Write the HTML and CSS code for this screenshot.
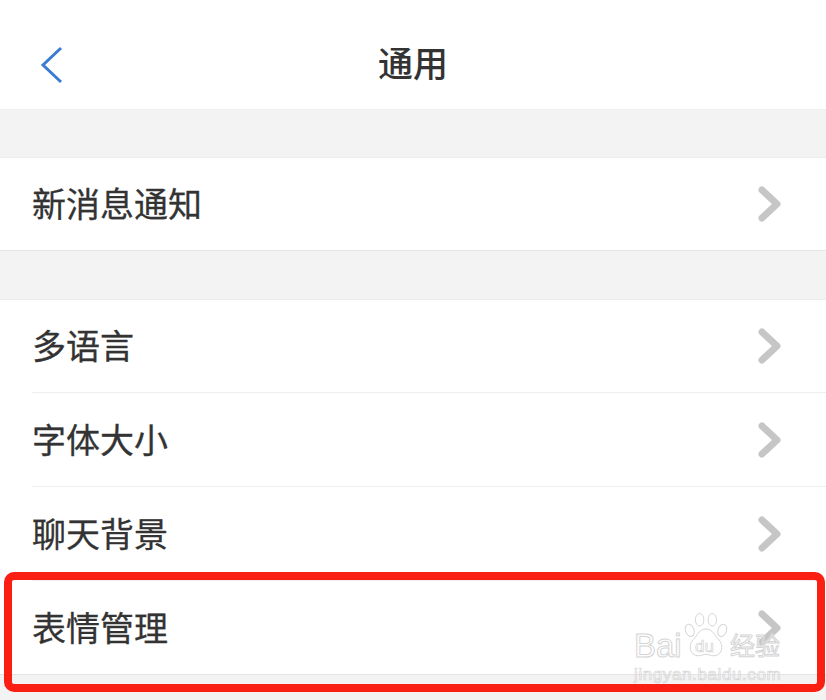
FILE: index.html
```html
<!DOCTYPE html>
<html>
<head>
  <meta charset="utf-8" />
  <title>通用</title>
  <link rel="stylesheet" href="styles.css">
</head>
<body>
  <div class="page">
    <header class="topbar">
      <svg class="back" width="24" height="38" viewBox="0 0 24 38">
        <path d="M21 2 L3 19 L21 36" />
      </svg>
      <h1>通用</h1>
    </header>

    <div class="group">
      <div class="row"><span>新消息通知</span>
        <svg class="arrow" width="26" height="38" viewBox="0 0 26 38"><path d="M5 5 L20 19 L5 33" /></svg>
      </div>
    </div>

    <div class="group group-long">
      <div class="row"><span>多语言</span>
        <svg class="arrow" width="26" height="38" viewBox="0 0 26 38"><path d="M5 5 L20 19 L5 33" /></svg>
      </div>
      <div class="row"><span>字体大小</span>
        <svg class="arrow" width="26" height="38" viewBox="0 0 26 38"><path d="M5 5 L20 19 L5 33" /></svg>
      </div>
      <div class="row"><span>聊天背景</span>
        <svg class="arrow" width="26" height="38" viewBox="0 0 26 38"><path d="M5 5 L20 19 L5 33" /></svg>
      </div>
      <div class="row"><span>表情管理</span>
        <svg class="arrow" width="26" height="38" viewBox="0 0 26 38"><path d="M5 5 L20 19 L5 33" /></svg>
      </div>
    </div>

    <!-- red highlight drawn over the last row -->
    <div class="highlight"></div>

    <!-- watermark -->
    <div class="watermark">
      <span class="wm-latin">Bai</span>
      <svg class="paw" width="46" height="48" viewBox="0 0 62 68">
        <ellipse cx="8" cy="26" rx="6" ry="9" transform="rotate(-20 8 26)" />
        <ellipse cx="22" cy="11" rx="6" ry="9" />
        <ellipse cx="40" cy="11" rx="6" ry="9" />
        <ellipse cx="54" cy="26" rx="6" ry="9" transform="rotate(20 54 26)" />
        <path d="M31 24 C22 24 19 33 13 39 C5 47 8 62 20 62 C25 62 27 60 31 60 C35 60 37 62 42 62 C54 62 57 47 49 39 C43 33 40 24 31 24 Z" />
      </svg>
      <span class="wm-du">du</span>
      <span class="wm-cn">经验</span>
      <div class="wm-url">jingyan.baidu.com</div>
    </div>
  </div>
</body>
</html>
```

FILE: styles.css
```css
html, body {
  margin: 0;
  padding: 0;
  background: #f4f3f4;
  font-family: "Noto Sans CJK SC", "Liberation Sans", sans-serif;
  overflow: hidden;
}

.page {
  position: relative;
  width: 826px;
  height: 700px;
  overflow: hidden;
}

.topbar {
  position: relative;
  box-sizing: border-box;
  height: 110px;
  padding-top: 14px;
  background: #fff;
  border-bottom: 1px solid #efefef;
  display: flex;
  align-items: center;
  justify-content: center;
}

.topbar h1 {
  margin: 0;
  font-size: 35px;
  font-weight: 500;
  color: #333;
  line-height: 1;
}

.back {
  position: absolute;
  left: 40px;
  top: 46px;
}

.back path {
  fill: none;
  stroke: #3b7bd6;
  stroke-width: 3;
}

.group {
  margin-top: 47px;
  background: #fff;
  border-top: 1px solid #ececec;
  border-bottom: 1px solid #e4e4e4;
  padding-left: 32px;
}

.group-long {
  margin-top: 48px;
}

.row {
  height: 93px;
  display: flex;
  align-items: center;
  justify-content: space-between;
  padding-right: 43px;
  font-size: 34px;
  color: #333;
  -webkit-text-stroke: 0.3px #333;
  border-top: 1px solid #eeeeee;
}

.row:first-child {
  border-top: none;
  height: 92px;
}

.row span {
  line-height: 1;
  position: relative;
  top: -1px;
}

.arrow path {
  fill: none;
  stroke: #c6c6c6;
  stroke-width: 7;
  stroke-linecap: round;
  stroke-linejoin: round;
}

.highlight {
  position: absolute;
  left: 4px;
  top: 572px;
  width: 805px;
  height: 104px;
  border: 8px solid #fb1f13;
  border-radius: 10px;
}

.watermark {
  position: absolute;
  left: 634px;
  top: 612px;
  width: 150px;
  height: 72px;
}

.wm-latin, .wm-du, .wm-cn {
  position: absolute;
  color: rgba(255, 255, 255, 0.6);
  -webkit-text-stroke: 1px #d4d4d4;
  line-height: 1;
}

.wm-latin {
  left: 0;
  top: 17px;
  font-family: "Liberation Sans", sans-serif;
  font-size: 33px;
}

.paw {
  position: absolute;
  left: 49px;
  top: 0;
}

.paw ellipse, .paw path {
  fill: rgba(255, 255, 255, 0.55);
  stroke: #d4d4d4;
  stroke-width: 1.4;
}

.wm-du {
  left: 61px;
  top: 26px;
  font-family: "Liberation Sans", sans-serif;
  font-size: 17px;
  -webkit-text-stroke: 0.7px #d4d4d4;
}

.wm-cn {
  left: 96px;
  top: 20px;
  font-size: 25px;
  white-space: nowrap;
}

.wm-url {
  position: absolute;
  left: 0;
  top: 54px;
  font-family: "Liberation Sans", sans-serif;
  font-size: 17px;
  line-height: 1;
  letter-spacing: 0.6px;
  white-space: nowrap;
  color: rgba(255, 255, 255, 0.5);
  -webkit-text-stroke: 0.7px #d4d4d4;
}
```
